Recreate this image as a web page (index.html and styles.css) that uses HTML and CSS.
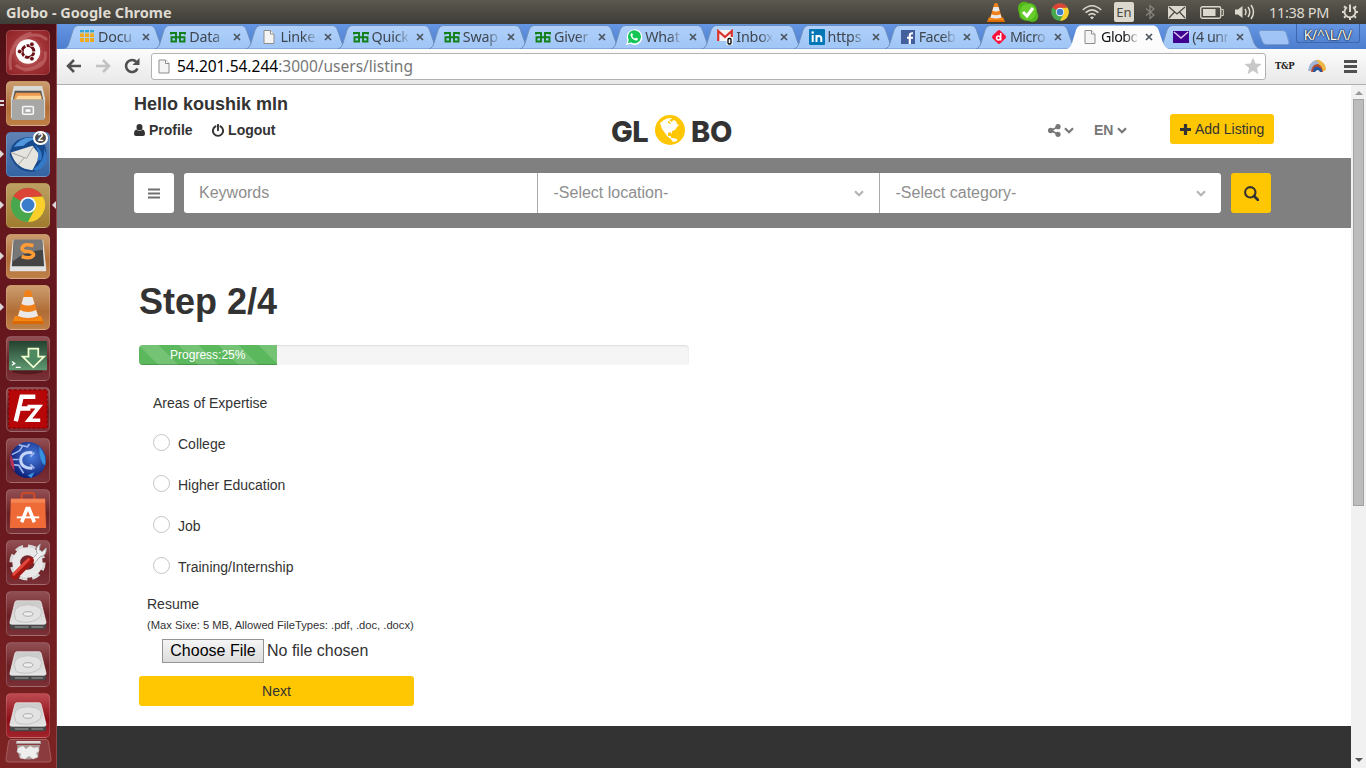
FILE: index.html
```html
<!DOCTYPE html>
<html lang="en">
<head>
<meta charset="utf-8">
<title>Globo</title>
<link rel="stylesheet" href="styles.css">
</head>
<body>
<svg class="defs" width="0" height="0" aria-hidden="true">
  <defs>
    <linearGradient id="tabFill" x1="0" y1="0" x2="0" y2="1"><stop offset="0" stop-color="#b0d0fa"/><stop offset="1" stop-color="#9fc6f6"/></linearGradient>
    <linearGradient id="green" x1="0" y1="0" x2="0" y2="1"><stop offset="0" stop-color="#24412f"/><stop offset="1" stop-color="#5f9a72"/></linearGradient>
    <linearGradient id="lid" x1="0" y1="0" x2="0" y2="1"><stop offset="0" stop-color="#c9c9c9"/><stop offset="1" stop-color="#e4e4e4"/></linearGradient>
    <radialGradient id="blueBall" cx=".6" cy=".4" r=".65"><stop offset="0" stop-color="#4a7ee0"/><stop offset="1" stop-color="#081a70"/></radialGradient>
    <symbol id="tab" viewBox="0 0 102 24"><path d="M0 24C3 23 4 21 5 18L9 5Q10.500 .5 14 .5H86Q90 .5 91.500 5L96 18Q98 23 102 24Z" fill="url(#tabFill)" stroke="#6b8fbd"/></symbol>
    <symbol id="tabActive" viewBox="0 0 102 24"><path d="M0 24C3 23 4 21 5 18L9 5Q10.500 .5 14 .5H86Q90 .5 91.500 5L96 18Q98 23 102 24Z" fill="#fcfcfc"/></symbol>
    <symbol id="close" viewBox="0 0 8 8"><path d="M1 1L7 7M7 1L1 7" stroke="#4c5560" stroke-width="1.700"/></symbol>
    <symbol id="page" viewBox="0 0 16 16"><path d="M3 1.500H9.500L13 5V14.500H3Z" fill="#f4f4f4" stroke="#8d8d8d"/><path d="M9.500 1.500V5H13" fill="#fff" stroke="#8d8d8d"/></symbol>
    <symbol id="gfg" viewBox="0 0 16 16"><path d="M1 5.500V4H6V12.500H1.500V8.300H14.500V12.500H10V4H15V5.500" fill="none" stroke="#128019" stroke-width="1.900"/></symbol>
    <symbol id="cone" viewBox="0 0 36 36"><path d="M5 27H31L34 35H2Z" fill="#f58a13"/><path d="M2 35L3 32H33L34 35Z" fill="#d96805"/><path d="M15 2Q18 0 21 2L29 29Q18 34 7 29Z" fill="#f08019"/><path d="M13.500 8H22.500L24.500 15Q18 18 11.500 15ZM10 21Q18 25 26 21L28 27Q18 31 8 27Z" fill="#e9e9e9"/></symbol>
    <symbol id="chrome" viewBox="0 0 36 36"><circle cx="18" cy="18" r="17.500" fill="#49a84d"/><path d="M2.840 9.250A17.500 17.500 0 0 1 33.160 9.250L18 10A8 8 0 0 0 11 14Z" fill="#db4437"/><path d="M33.160 9.250A17.500 17.500 0 0 1 18 35.500L25 22A8 8 0 0 0 18 10Z" fill="#fbcf2b"/><path d="M2.840 9.250L11 22 18 26 16 20Z" fill="#49a84d"/><circle cx="18" cy="18" r="8.300" fill="#fff"/><circle cx="18" cy="18" r="6.600" fill="#3b7dcb"/></symbol>
    <symbol id="chev" viewBox="0 0 10 7"><path d="M1 1.200L5 5.200 9 1.200" fill="none" stroke="currentColor" stroke-width="2.200"/></symbol>
    <symbol id="disk" viewBox="0 0 45 45"><path d="M4 32H41V37Q41 39 39 39H6Q4 39 4 37Z" fill="#474747"/><path d="M9 12Q9.500 10 11 10H34Q35.500 10 36 12L41 32Q41 34 39 34H6Q3.500 34 4 32Z" fill="url(#lid)" stroke="#f5f5f5" stroke-width=".7"/><path d="M10 29Q4 15 22 14Q41 15 35 26Q33 30 22 32Q11 32 10 29Z" fill="#e2e2e2" stroke="#bcbcbc" stroke-width=".8"/><ellipse cx="22.500" cy="23.500" rx="5" ry="2.300" fill="#eee" stroke="#aaa"/><path d="M9 36.800H23M26 36.800H38" stroke="#858585" stroke-width="1.500"/></symbol>
  </defs>
</svg>

<header class="panel">
  <div class="panel-title">Globo - Google Chrome</div>
  <div class="tray">
    <span class="slot"><svg width="20" height="21"><use href="#cone"/></svg></span>
    <span class="slot"><svg width="22" height="22" viewBox="0 0 22 22"><path d="M5 1Q8 0 11 2Q20 2 20 11Q23 16 19 20Q15 22 12 20Q2 20 2 12Q-1 4 5 1Z" fill="#51b81b"/><circle cx="11" cy="11" r="8" fill="#68cc2d"/><path d="M6 11L10 15 16 7" fill="none" stroke="#fff" stroke-width="3"/></svg></span>
    <span class="slot"><svg width="18" height="18"><use href="#chrome"/></svg></span>
    <span class="slot"><svg width="20" height="16" viewBox="0 0 20 16" fill="none" stroke="#dcd8ce" stroke-width="1.600"><path d="M.8 6Q10-2.500 19.200 6M3.600 8.700Q10 3 16.400 8.700M6.500 11.200Q10 8 13.500 11.200"/><path d="M8 13.200Q10 11.800 12 13.200L10 15.500Z" fill="#dcd8ce" stroke="none"/></svg></span>
    <span class="slot"><span class="lang">En</span></span>
    <span class="slot slot-bt"><svg width="10" height="16" viewBox="0 0 10 16"><path d="M1 4.500L9 11 5 14.500V1.500L9 5 1 11.500" fill="none" stroke="#8a877e" stroke-width="1.200"/></svg></span>
    <span class="slot slot-mail"><svg width="18" height="13" viewBox="0 0 18 13"><rect width="18" height="13" rx="1" fill="#dcd8ce"/><path d="M1 1L9 8 17 1M1 12L6.500 6M17 12L11.500 6" fill="none" stroke="#4a4842" stroke-width="1.200"/></svg></span>
    <span class="slot slot-bat"><svg width="24" height="13" viewBox="0 0 24 13"><rect x=".75" y=".75" width="20" height="11.500" rx="1.800" fill="none" stroke="#dcd8ce" stroke-width="1.300"/><rect x="3" y="3" width="12.500" height="7" fill="#dcd8ce"/><path d="M21.500 3.500H23.300V9.500H21.500" fill="none" stroke="#dcd8ce"/></svg></span>
    <span class="slot slot-vol"><svg width="20" height="16" viewBox="0 0 20 16"><path d="M0 5.500H3L7.500 2V14L3 10.500H0Z" fill="#dcd8ce"/><path d="M10 5Q12 8 10 11M13 3Q16.500 8 13 13M16 1Q21 8 16 15" fill="none" stroke="#dcd8ce" stroke-width="1.500"/></svg></span>
    <span class="slot slot-time">11:38 PM</span>
    <span class="slot slot-power"><svg width="16" height="16" viewBox="0 0 16 16" fill="none" stroke="#dcd8ce"><path d="M5 3.200A5.500 5.500 0 1 0 11 3.200" stroke-width="1.800"/><path d="M8 .5V8" stroke-width="2"/><path d="M0 8H2M14 8H16M8 14V16M2 13.800L3.600 12.200M14 13.800L12.400 12.200M2 2.200L3.600 3.800M14 2.200L12.400 3.800" stroke-width="2"/></svg></span>
  </div>
</header>

<div class="desktop">
<nav class="launcher">
  <div class="tile t-dash"><svg viewBox="0 0 45 45"><path d="M5 41Q0 15 23 6Q34 3 42 10M6 24Q8 8 26 3M40 22Q43 40 18 41M10 36Q22 46 38 32" fill="none" stroke="#d28a8c" stroke-width="3" opacity=".45"/><circle cx="22.500" cy="22" r="12.500" fill="#fff"/><circle cx="22.500" cy="22" r="6" fill="none" stroke="#6b1117" stroke-width="3" stroke-dasharray="11.200 1.360" stroke-dashoffset="-1"/><g fill="#6b1117" stroke="#fff" stroke-width=".8"><circle cx="14" cy="22" r="2.400"/><circle cx="26.500" cy="14.600" r="2.400"/><circle cx="26.500" cy="29.400" r="2.400"/></g></svg></div>
  <div class="tile t-orange"><i class="pips"></i><svg viewBox="0 0 45 45"><path d="M8 5H37L40 18V38H5V18Z" fill="#d9d9d6"/><path d="M9 10H36L38 19H7Z" fill="#57534e"/><path d="M10 12H35L37 19H8Z" fill="#e99a50"/><path d="M12 15H36V19H10Z" fill="#ffd59a"/><rect x="6" y="19" width="33" height="21" rx="1" fill="#a7a7a5"/><rect x="17" y="26" width="11" height="8" rx="1" fill="#ababab" stroke="#f7f7f7" stroke-width="1.600"/><rect x="20" y="29" width="5" height="2.500" fill="#fff"/></svg></div>
  <div class="tile t-blue"><i class="pip"></i><svg viewBox="0 0 45 45"><path d="M4 24Q4 10 18 6Q34 2 40 14Q45 32 32 40Q12 44 4 24Z" fill="#164a8d"/><path d="M8 15Q18 2 32 7Q24 8 18 14Z" fill="#4f96dc"/><path d="M5 21L27 14 35 24 27 39Q10 38 5 21Z" fill="#e6e4df"/><path d="M5 21L21 27 28 15M12 34L19 26" fill="none" stroke="#a5a39f"/><path d="M28 38Q40 30 39 17L42 24Q42 36 31 40ZM32 29Q35 20 29 13Q39 19 36 29Z" fill="#3479c8"/></svg><b class="count">2</b></div>
  <div class="tile t-gold"><i class="pip"></i><i class="pip-right"></i><svg viewBox="0 0 45 45"><use href="#chrome" x="4.500" y="4.500" width="36" height="36"/></svg></div>
  <div class="tile t-orange"><i class="pip"></i><svg viewBox="0 0 45 45"><path d="M7 6H38L41 34V38H4V34Z" fill="#e2e2e2"/><path d="M8 6H37L39 33H6Z" fill="#444"/><path d="M8 6H37L38 16Q20 17 7 28Z" fill="#777"/><path d="M28 12Q17 9 16.500 15Q17 18 23 18Q29 19 28 22Q25 26 16 23" fill="none" stroke="#ff9c35" stroke-width="3.600"/></svg></div>
  <div class="tile t-orange"><i class="pip"></i><svg viewBox="0 0 45 45"><use href="#cone" x="4" y="4" width="37" height="37"/></svg></div>
  <div class="tile t-plain"><svg viewBox="0 0 45 45"><ellipse cx="22" cy="36" rx="16" ry="3" fill="#3f1216" opacity=".6"/><rect x="3" y="5" width="39" height="30" rx="1" fill="url(#green)"/><path d="M23 13H33V21H39L28 32 17 21H23Z" fill="#4d8a62" stroke="#f4ffd2" stroke-width="1.800"/><path d="M6 26L9 28 6 30M10 32H15" fill="none" stroke="#fff" stroke-width="1.300"/></svg></div>
  <div class="tile t-plain"><svg viewBox="0 0 45 45"><rect x="3" y="3" width="39" height="39" fill="#b70608" stroke="#8e0205" stroke-width="1.500" stroke-dasharray="3 2"/><path d="M10 35L16 10H30M13 22H25" fill="none" stroke="#fff" stroke-width="4.500"/><path d="M22 20H34L23 34H35" fill="none" stroke="#fff" stroke-width="3.800"/></svg></div>
  <div class="tile t-plain"><svg viewBox="0 0 45 45"><circle cx="22.500" cy="22.500" r="18.500" fill="url(#blueBall)"/><path d="M27 15Q16 14 15 22Q15 31 27 31" fill="none" stroke="#c5d3f8" stroke-width="3"/><path d="M6 17L14 13 17 8M5 22H13M5 27L13 28 18 36M25 19L29 15M25 27L29 31M13 7L22 9 24 6" fill="none" stroke="#a2b6ee" stroke-width="1.700"/><path d="M34 9Q42 18 40 28Q34 25 34 9ZM22 38L29 35 26 41Z" fill="#3791dd"/><path d="M5 16Q2 27 9 34L8 25Z" fill="#b53053"/></svg></div>
  <div class="tile t-plain"><svg viewBox="0 0 45 45"><path d="M16 13V7Q16 4 20 4H26Q29 4 29 7V13" fill="none" stroke="#c64b2c" stroke-width="2.400"/><path d="M5 10H40L41 40H4Z" fill="#ee6b37"/><path d="M5 10H40V14H5Z" fill="#f48454"/><path d="M16 34L21.500 20H23.500L29 34" fill="none" stroke="#fff" stroke-width="3.600"/><path d="M11 29H34" stroke="#fff" stroke-width="2"/></svg></div>
  <div class="tile t-plain"><svg viewBox="0 0 45 45"><circle cx="22" cy="23" r="15.500" fill="none" stroke="#d8d8d8" stroke-width="6" stroke-dasharray="7.500 4.670"/><circle cx="22" cy="23" r="11.500" fill="none" stroke="#e8e8e8" stroke-width="8"/><circle cx="22" cy="23" r="7" fill="#74262c"/><path d="M25 21L32 14Q29 8 35 4L34 10 37 12 41 8Q42 16 35 17L29 24Z" fill="#eee" stroke="#a6a6a6"/><path d="M9 37L25 21" stroke="#a51713" stroke-width="7" stroke-linecap="round"/><path d="M8 35L23 20" stroke="#e4483b" stroke-width="3" stroke-linecap="round"/></svg></div>
  <div class="tile t-plain"><svg><use href="#disk"/></svg></div>
  <div class="tile t-plain"><svg><use href="#disk"/></svg></div>
  <div class="tile t-red"><svg><use href="#disk"/></svg></div>
  <div class="trash"><svg width="47" height="24" viewBox="0 0 47 24"><path d="M6 .5H41Q43 .5 43.500 3L46 20Q46.500 23 44 23H3Q.5 23 1 20L3.500 3Q4 .5 6 .5Z" fill="#8b3a3d" stroke="#a85c5d"/><path d="M11 2H36V5H11ZM12 6H35L33 18Q23 23 14 18Z" fill="#a99a98"/><path d="M12 3H35" stroke="#eee" stroke-width="1.500"/><path d="M13 9L18 7 21 10 25 7 29 9 33 8 34 12 31 14 33 18 28 20 24 17 20 20 15 19 16 15 12 13Z" fill="#eee" stroke="#ccc" stroke-width=".6"/></svg></div>
</nav>

<div class="browser">
  <div class="tabstrip">
    <div class="tab"><svg class="shape"><use href="#tab"/></svg><svg class="fav" viewBox="0 0 16 16"><path d="M1 1H15V4H1Z" fill="#31a5dd"/><path d="M1 3.500H15V13H1Z" fill="#f0aa1f"/><path d="M5.500 1V13M10.500 1V13M1 4H15M1 8.500H15" stroke="#b1d0ed"/></svg><span class="label">Docu</span><svg class="x"><use href="#close"/></svg></div>
    <div class="tab"><svg class="shape"><use href="#tab"/></svg><svg class="fav"><use href="#gfg"/></svg><span class="label">Data</span><svg class="x"><use href="#close"/></svg></div>
    <div class="tab"><svg class="shape"><use href="#tab"/></svg><svg class="fav"><use href="#page"/></svg><span class="label">Linke</span><svg class="x"><use href="#close"/></svg></div>
    <div class="tab"><svg class="shape"><use href="#tab"/></svg><svg class="fav"><use href="#gfg"/></svg><span class="label">Quick</span><svg class="x"><use href="#close"/></svg></div>
    <div class="tab"><svg class="shape"><use href="#tab"/></svg><svg class="fav"><use href="#gfg"/></svg><span class="label">Swap</span><svg class="x"><use href="#close"/></svg></div>
    <div class="tab"><svg class="shape"><use href="#tab"/></svg><svg class="fav"><use href="#gfg"/></svg><span class="label">Giver</span><svg class="x"><use href="#close"/></svg></div>
    <div class="tab"><svg class="shape"><use href="#tab"/></svg><svg class="fav" viewBox="0 0 16 16"><path d="M0 16L1.500 11.500A7.800 7.800 0 1 1 4.500 14.800Z" fill="#fff"/><path d="M1.800 14.300L2.800 11A6.500 6.500 0 1 1 5 13.300Z" fill="#14c656"/><path d="M5 4.500Q6.500 3.500 7 6L6.200 7.200Q7.300 9 9 9.800L10 8.800Q12.500 9.200 11.500 11Q9.500 12.500 6.500 9.700Q3.500 6.500 5 4.500Z" fill="#fff"/></svg><span class="label">What</span><svg class="x"><use href="#close"/></svg></div>
    <div class="tab"><svg class="shape"><use href="#tab"/></svg><svg class="fav" viewBox="0 0 16 16"><path d="M0 1H16V12H0Z" fill="#f4f4f4"/><path d="M1.200 12V2L8 8 14.800 2V8" fill="none" stroke="#d7342e" stroke-width="2.200"/><rect x="9.500" y="8" width="6" height="8" fill="#fff"/><rect x="11" y="9.500" width="3" height="5.500" rx="1" fill="#fff" stroke="#000" stroke-width="1.300"/></svg><span class="label">Inbox</span><svg class="x"><use href="#close"/></svg></div>
    <div class="tab"><svg class="shape"><use href="#tab"/></svg><svg class="fav" viewBox="0 0 16 16"><rect width="16" height="16" rx="1" fill="#0177b5"/><path d="M3.700 6V13M7.500 13V6M7.500 9Q8 7 10 7Q12.300 7 12.300 9.500V13" fill="none" stroke="#fff" stroke-width="2"/><circle cx="3.700" cy="3.500" r="1.300" fill="#fff"/></svg><span class="label">https</span><svg class="x"><use href="#close"/></svg></div>
    <div class="tab"><svg class="shape"><use href="#tab"/></svg><svg class="fav" viewBox="0 0 16 16"><rect x="1" y="1" width="14" height="14" fill="#43609c"/><path d="M9.800 15V6Q9.800 4 13 4.200M7 8.800H13" fill="none" stroke="#fff" stroke-width="2.100"/></svg><span class="label tight">Faceb</span><svg class="x"><use href="#close"/></svg></div>
    <div class="tab"><svg class="shape"><use href="#tab"/></svg><svg class="fav" viewBox="0 0 16 16"><rect x="2.500" y="2.500" width="11" height="11" rx="2" transform="rotate(45 8 8)" fill="#f9103b"/><circle cx="7.500" cy="9" r="1.900" fill="none" stroke="#fff" stroke-width="1.500"/><path d="M9.700 4V11.500" stroke="#fff" stroke-width="1.500"/></svg><span class="label tight">Micro</span><svg class="x"><use href="#close"/></svg></div>
    <div class="tab tab-active"><svg class="shape"><use href="#tabActive"/></svg><svg class="fav"><use href="#page"/></svg><span class="label tight">Globo</span><svg class="x"><use href="#close"/></svg></div>
    <div class="tab"><svg class="shape"><use href="#tab"/></svg><svg class="fav" viewBox="0 0 16 16"><rect y="2" width="16" height="12" fill="#400090"/><path d="M1 3L8 9 15 3" fill="none" stroke="#d9c8f0" stroke-width="1.500"/></svg><span class="label tight">(4 unr</span><svg class="x"><use href="#close"/></svg></div>
    <svg class="newtab" width="32" height="15" viewBox="0 0 32 15"><path d="M3 .5H25Q27 .5 28 2.500L31 12Q31.500 14.500 29 14.500H8Q5.500 14.500 4.500 12L1 3Q.5 .5 3 .5Z" fill="#9fc4f5" stroke="#7599ce"/></svg>
    <div class="profile-badge">K/^\L/\/</div>
  </div>

  <div class="toolbar">
    <svg class="nav-icon" width="16" height="14" viewBox="0 0 16 14"><path d="M8 1L2 7 8 13M2 7H15" fill="none" stroke="#505050" stroke-width="2.500"/></svg>
    <svg class="nav-icon" width="16" height="14" viewBox="0 0 16 14"><path d="M8 1L14 7 8 13M14 7H1" fill="none" stroke="#c2c2c2" stroke-width="2.500"/></svg>
    <svg class="nav-icon" width="16" height="16" viewBox="0 0 16 16"><path d="M12.500 4A6 6 0 1 0 13.500 10.500" fill="none" stroke="#505050" stroke-width="2.600"/><path d="M15.500 0V7H8.500Z" fill="#505050"/></svg>
    <div class="omnibox">
      <svg width="16" height="17" viewBox="0 0 16 16"><use href="#page"/></svg>
      <span class="url">54.201.54.244<span>:3000/users/listing</span></span>
      <svg class="star" width="18" height="18" viewBox="0 0 18 18"><path d="M9 .5L11.400 6.400 17.700 6.900 12.900 11 14.400 17.200 9 13.800 3.600 17.200 5.100 11 .3 6.900 6.600 6.400Z" fill="#c8c8c8"/></svg>
    </div>
    <span class="ext">T&amp;P</span>
    <svg class="rainbow" width="18" height="14" viewBox="0 0 18 14"><path d="M5 3Q9-1 13 2Q18 5 18 11L14 13Z" fill="#efb744"/><path d="M0 12Q1 3 8 1L11 4 3 12Z" fill="#a0b6d4"/><path d="M3 13Q4 5 10 5Q14 6 15 13Z" fill="#b64c32"/><path d="M5 13Q5 7 10 8Q14 9 14 13Z" fill="#27559e"/><path d="M7 13Q10 9 12 13Z" fill="#eee"/></svg>
    <svg width="13" height="13" viewBox="0 0 13 13"><path d="M0 1.500H13M0 6.500H13M0 11.500H13" stroke="#505050" stroke-width="2.800"/></svg>
  </div>

  <div class="viewport">
    <main class="site">
      <header class="site-head">
        <div class="account">
          <div class="hello">Hello koushik mln</div>
          <div class="account-links">
            <a class="profile"><svg width="11" height="12" viewBox="0 0 11 12"><path d="M5.500 0A3 3.200 0 0 1 5.500 6.400A3 3.200 0 0 1 5.500 0ZM2.500 5.500Q5.500 8.500 8.500 5.500Q11 6 11 10Q11 12 9 12H2Q0 12 0 10Q0 6 2.500 5.500Z" fill="#333"/></svg>Profile</a>
            <a class="logout"><svg width="12" height="13" viewBox="0 0 12 13"><path d="M3.500 2.300A5.100 5.100 0 1 0 8.500 2.300M6 .8V6.300" fill="none" stroke="#333" stroke-width="1.900" stroke-linecap="round"/></svg>Logout</a>
          </div>
        </div>
        <div class="logo"><span class="logo-gl">GL</span><svg width="30" height="30" viewBox="0 0 30 30"><circle cx="15" cy="15" r="15" fill="#ffc602"/><path d="M5 8L9 5 12 3.500 16 3 17 4 14 5 17 7 18 5 21 6 22 9 24 10 22 12 20 15 17 16 17 19 15 17 13 18 13 21 16 21 16 23 18 23 22 24 22 26 18 27 16 24 12 21 10 18 7 14Z" fill="#fff"/><path d="M13 6L15 7 16 9 13 8Z" fill="#ffc602"/></svg><span class="logo-bo">BO</span></div>
        <div class="site-tools">
          <a class="share"><svg width="13" height="13" viewBox="0 0 13 13"><circle cx="2.700" cy="6.500" r="2.700" fill="#777"/><circle cx="10" cy="2.700" r="2.600" fill="#777"/><circle cx="10" cy="10.300" r="2.600" fill="#777"/><path d="M10 2.700L3 6.500 10 10.300" fill="none" stroke="#777" stroke-width="1.700"/></svg><svg width="10" height="7"><use href="#chev"/></svg></a>
          <a class="lang-menu">EN<svg width="10" height="7"><use href="#chev"/></svg></a>
          <a class="add"><svg width="11" height="11" viewBox="0 0 11 11"><path d="M5.500 0V11M0 5.500H11" stroke="#333" stroke-width="3.200"/></svg>Add Listing</a>
        </div>
      </header>

      <section class="search">
        <div class="menu-btn"><svg width="12" height="11" viewBox="0 0 12 11"><path d="M0 1.500H12M0 5.500H12M0 9.500H12" stroke="#707070" stroke-width="2"/></svg></div>
        <div class="fields">
          <div class="field">Keywords</div>
          <div class="field">-Select location-<svg width="10" height="7"><use href="#chev"/></svg></div>
          <div class="field">-Select category-<svg width="10" height="7"><use href="#chev"/></svg></div>
        </div>
        <div class="search-btn"><svg width="15" height="15" viewBox="0 0 15 15"><circle cx="6.300" cy="6.300" r="5.200" fill="none" stroke="#333" stroke-width="2.100"/><path d="M10 10L14 14" stroke="#333" stroke-width="2.600" stroke-linecap="round"/></svg></div>
      </section>

      <section class="content">
        <h1>Step 2/4</h1>
        <div class="progress"><div class="bar" style="width:25%">Progress:25%</div></div>
        <div class="question">
          <div>Areas of Expertise</div>
          <label class="option"><span class="radio"></span>College</label>
          <label class="option"><span class="radio"></span>Higher Education</label>
          <label class="option"><span class="radio"></span>Job</label>
          <label class="option"><span class="radio"></span>Training/Internship</label>
        </div>
        <div class="resume">
          <div>Resume</div>
          <div class="hint">(Max Sixe: 5 MB, Allowed FileTypes: .pdf, .doc, .docx)</div>
          <div class="file"><span class="choose">Choose File</span><span class="nofile">No file chosen</span></div>
        </div>
        <div class="next">Next</div>
      </section>
      <footer class="site-foot"></footer>
    </main>
    <div class="scrollbar"><i class="up"></i><div class="thumb"></div><i class="down"></i></div>
  </div>
</div>
</div>
</body>
</html>
```
FILE: styles.css
```css
* { box-sizing: border-box; }
body { margin: 0; width: 1366px; height: 768px; overflow: hidden; font: 14px/20px "Liberation Sans", Arial, sans-serif; color: #333; }
svg { display: block; flex: none; }
.defs { position: absolute; }

/* Desktop panel */
.panel { height: 24px; display: flex; justify-content: space-between; background: linear-gradient(#5b584f, #3e3c37); color: #dfdbd2; font-family: "Noto Sans", sans-serif; }
.panel-title { padding-left: 6px; font-weight: 700; font-size: 14.5px; line-height: 24px; }
.tray { display: flex; }
.slot { width: 32px; display: flex; align-items: center; justify-content: center; }
.slot-bt { width: 20px; }
.slot-mail { width: 34px; }
.slot-bat { width: 36px; }
.slot-vol { width: 30px; }
.slot-time { width: 78px; font-size: 14.5px; letter-spacing: -.35px; white-space: nowrap; }
.slot-power { width: 28px; padding-right: 4px; }
.lang { width: 20px; height: 20px; border-radius: 2px; background: #dcd8ce; color: #4a4842; font-size: 13px; line-height: 20px; text-align: center; }

/* Launcher */
.desktop { display: flex; height: 744px; }
.launcher { width: 57px; padding: 6px 0 0 6px; display: flex; flex-direction: column; gap: 6px; overflow: hidden; background: linear-gradient(#4c0f15, #64171d 12%, #66171e 60%, #7c2222); border-right: 1px solid #90494b; }
.tile { position: relative; width: 44px; height: 45px; flex: none; border-radius: 5px; border: 1px solid rgba(255,255,255,.16); }
.tile svg { width: 44px; height: 44px; margin: -1px; }
.t-dash { background: radial-gradient(#d98b8c, #a23336 55%, #8c2226); }
.t-orange { background: linear-gradient(#cb9c6e, #b06c35 60%, #bf8148); }
.t-blue { background: linear-gradient(#5f82b5, #3464a4); }
.t-gold { background: linear-gradient(#bca062, #a07b2e); }
.t-plain { background: linear-gradient(#925054, #6b2025 55%, #793036); }
.t-red { background: linear-gradient(#bd4a50, #8c0e17 60%, #a2222a); }
.trash { margin: -5px 0 0 -1px; }
.pip, .pip-right, .pips { position: absolute; }
.pip { left: -7px; top: 17px; border: 4px solid transparent; border-left-color: #dcd8d8; border-right: 0; }
.pip-right { right: -7px; top: 17px; border: 4px solid transparent; border-right-color: #dcd8d8; border-left: 0; }
.pips { left: -7px; top: 18px; width: 4px; height: 6px; border: solid #dcd8d8; border-width: 2px 0; }
.count { position: absolute; right: 1px; top: -2px; width: 15px; height: 14px; border: 2px solid #fff; border-radius: 7px; background: #4b4b4b; color: #fff; font-size: 10px; line-height: 10px; text-align: center; }

/* Browser frame */
.browser { width: 1309px; }
.tabstrip { height: 25px; padding: 1px 0 0 7px; display: flex; background: linear-gradient(#6496e4, #4d7dcd); font-family: "Noto Sans", sans-serif; }
.tab { position: relative; z-index: 0; width: 91.2px; height: 24px; padding-left: 15px; display: flex; align-items: center; flex: none; }
.tab-active { z-index: 1; }
.shape { position: absolute; z-index: -1; left: 0; top: 0; width: 102px; height: 24px; }
.fav { width: 16px; height: 16px; }
.label { width: 36px; height: 24px; margin-left: 3px; overflow: hidden; white-space: nowrap; font-size: 14.3px; line-height: 23px; letter-spacing: -.2px; color: #3f4650; -webkit-mask-image: linear-gradient(90deg, #000 65%, rgba(0,0,0,.15)); mask-image: linear-gradient(90deg, #000 65%, rgba(0,0,0,.15)); }
.tight { letter-spacing: -.5px; }
.tab-active .label { color: #111; }
.x { width: 8px; height: 8px; margin-left: 8px; }
.newtab { margin: 5px 0 0 8.4px; }
.profile-badge { width: 64px; height: 19px; margin: -1px 0 0 6px; border: 1px solid #3e67ae; border-top: 0; border-radius: 0 0 3px 3px; color: #fff; font-size: 13.5px; line-height: 23px; text-align: center; text-shadow: 0 0 2px #000, 0 0 1px #000; white-space: nowrap; }
.toolbar { height: 36px; padding: 0 9px 1px 9px; display: flex; align-items: center; background: linear-gradient(#fcfcfc, #e8e8e8); border-bottom: 1px solid #b0b0b0; }
.nav-icon { margin-right: 13px; }
.nav-icon + .nav-icon + .nav-icon { margin-right: 11px; }
.omnibox { width: 1116px; height: 27px; padding: 0 3px 0 4px; display: flex; align-items: center; background: #fff; border: 1px solid #b2b2b2; border-radius: 3px; }
.url { flex: 1; padding-left: 5px; font: 15.5px/24px "Noto Sans", sans-serif; color: #000; }
.url span { color: #777; }
.ext { width: 20px; margin-left: 9px; font: 700 8.500px/12px "DejaVu Serif", serif; letter-spacing: -.4px; color: #222; }
.rainbow { margin: 0 18px 0 13px; }

/* Site */
.viewport { display: flex; height: 683px; }
.site { width: 1294px; background: #fff; }
.site-head { height: 73px; display: flex; padding-left: 77px; }
.account { width: 477px; padding-top: 9px; font-weight: 700; }
.hello { font-size: 18px; line-height: 20px; }
.account-links { display: flex; gap: 19.500px; padding-top: 6px; }
.account-links a { display: flex; align-items: center; gap: 4px; }
.logo { width: 122px; display: flex; align-items: flex-start; padding-top: 30px; font: 800 29px/34px Inter, sans-serif; }
.logo-gl { width: 44px; letter-spacing: -.5px; }
.logo-bo { margin-left: 6px; letter-spacing: -.3px; }
.site-tools { margin-left: 315px; padding-top: 29px; display: flex; color: #777; font-weight: 700; line-height: 32px; }
.site-tools a { display: flex; align-items: center; height: 32px; gap: 3px; }
.share { width: 46px; }
.site-tools .lang-menu { width: 76px; gap: 4px; }
.site-tools .add { width: 104px; height: 30px; padding-left: 10px; gap: 4px; border-radius: 3px; background: #ffc602; color: #333; font-weight: 400; white-space: nowrap; }
.search { height: 70px; padding: 15px 77px; display: flex; gap: 10px; background: #808080; }
.menu-btn, .search-btn { width: 40px; height: 40px; display: flex; align-items: center; justify-content: center; border-radius: 3px; background: #fff; }
.search-btn { background: #ffc602; }
.fields { width: 1037px; display: grid; grid-template-columns: 353px 342px 342px; border-radius: 3px; background: #fff; }
.field { display: flex; align-items: center; justify-content: space-between; padding: 0 15px; font-size: 16px; color: #8e8e8e; }
.field + .field { border-left: 1px solid #aaa; padding-left: 15.500px; }
.field svg { color: #b5b5b5; }
.content { height: 498px; padding: 54px 0 0 82px; }
h1 { margin: 0; font-size: 36px; line-height: 40px; }
.progress { width: 550px; height: 20px; margin-top: 23px; overflow: hidden; border-radius: 4px; background: #f5f5f5; box-shadow: inset 0 1px 2px rgba(0,0,0,.1); }
.bar { height: 20px; background: linear-gradient(45deg, rgba(255,255,255,.15) 25%, transparent 25%, transparent 50%, rgba(255,255,255,.15) 50%, rgba(255,255,255,.15) 75%, transparent 75%) 0 0 / 40px 40px #5cb85c; box-shadow: inset 0 -1px 0 rgba(0,0,0,.2); color: #fff; font-size: 12px; text-align: center; }
.question { padding: 28px 0 0 14px; display: flex; flex-direction: column; gap: 21px; }
.option { display: flex; height: 20px; }
.radio { width: 17px; height: 17px; margin-right: 8px; border: 1px solid #c4c4c4; border-radius: 50%; }
.resume { padding: 17px 0 0 8px; }
.hint { font-size: 11.2px; padding-top: 1px; white-space: nowrap; }
.file { display: flex; align-items: center; margin: 4px 0 0 15px; font-size: 16px; }
.choose { width: 102px; height: 24px; border: 1px solid #949494; background: linear-gradient(#f5f5f5, #dcdcdc); color: #000; line-height: 21px; text-align: center; }
.nofile { height: 24px; margin-left: 3px; line-height: 23px; }
.next { width: 275px; height: 30px; margin-top: 13px; border-radius: 3px; background: #ffc602; text-align: center; line-height: 30px; }
.site-foot { height: 42px; background: #333; }
.scrollbar { width: 15px; display: flex; flex-direction: column; align-items: center; background: #f1f1f1; }
.up { margin-top: 6px; border: 4px solid transparent; border-top: 0; border-bottom-color: #999; }
.thumb { width: 11px; height: 407px; margin-top: 4px; background: #bcbcbc; border: 1px solid #a3a3a3; }
.down { margin: auto 0 6px; border: 4px solid transparent; border-bottom: 0; border-top-color: #555; }
```
